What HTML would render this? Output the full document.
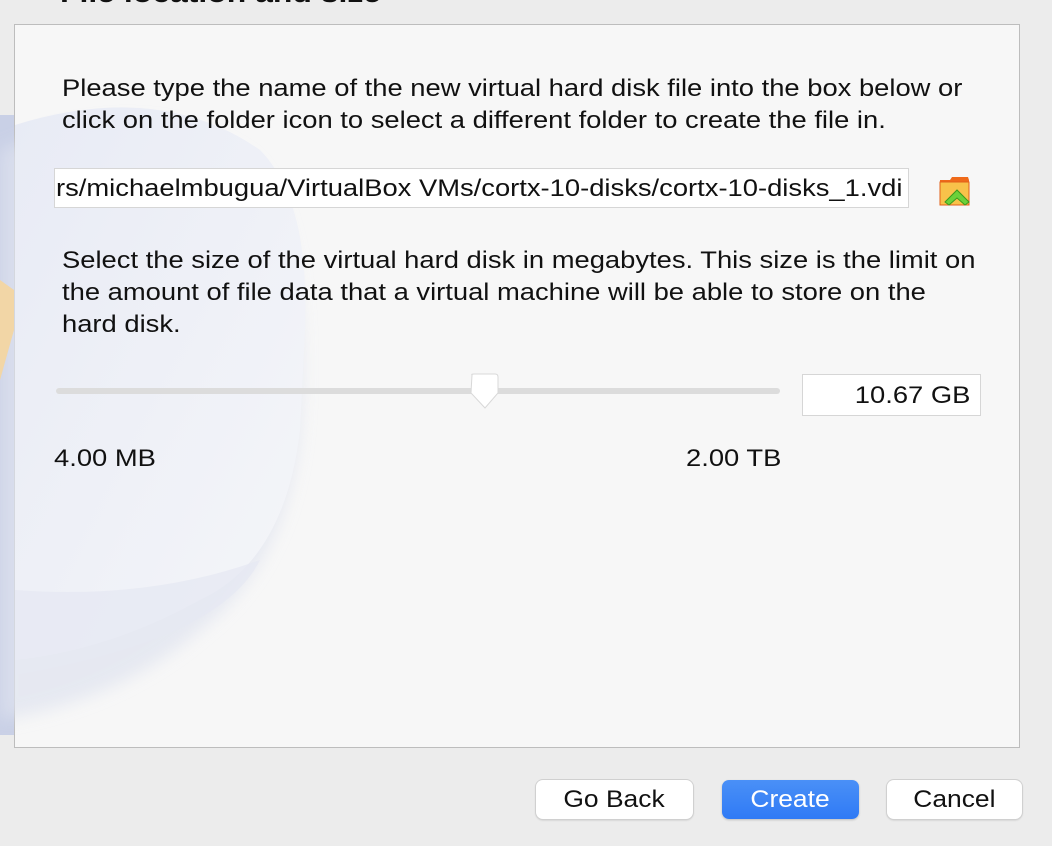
<!DOCTYPE html>
<html><head><style>
body{margin:0;width:1052px;height:846px;background:#ececec;font-family:"Liberation Sans",sans-serif;position:relative;overflow:hidden;color:#111}
.abs{position:absolute}
.s{display:inline-block;transform:scaleX(1.14);transform-origin:0 0}
.t{font-size:24px;line-height:32px;left:62px;white-space:nowrap}
.btn{position:absolute;top:780px;height:39px;border-radius:7px;background:#fff;box-shadow:0 0 0 1px #d0d0d0,0 1px 2px rgba(0,0,0,.2);font-size:24px;line-height:39px;text-align:center}
.btn span{display:inline-block;transform:scaleX(1.1)}
</style></head><body>
<svg class="abs" style="left:0;top:0" width="1052" height="846">
<defs>
<linearGradient id="g" x1="0" y1="0" x2="1" y2="1"><stop offset="0" stop-color="#e8ebf5"/><stop offset="1" stop-color="#f5f6f9"/></linearGradient>
<filter id="b"><feGaussianBlur stdDeviation="8"/></filter>
</defs>
<rect x="0" y="115" width="14" height="620" fill="#c9d0e6"/>
<rect x="14.5" y="24.5" width="1005" height="723" fill="#f7f7f7" stroke="#bdbdbd"/>
<path d="M0 150 Q150 90 250 160 Q310 220 300 420 Q290 560 200 630 Q120 700 0 720 Z" fill="#dfe3ef" filter="url(#b)" opacity=".7"/>
<path d="M15 125 Q160 80 260 150 Q310 200 305 330 L300 430 Q285 560 200 600 Q110 650 15 660 Z" fill="url(#g)"/>
<path d="M15 590 Q150 600 260 560 Q220 640 15 675 Z" fill="#e6e9f2" opacity=".8"/>
<path d="M0 280 L14 290 L14 330 L0 380Z" fill="#f2d6a6"/>
</svg>
<div class="abs" style="left:60px;top:-23px;font-size:28px;font-weight:bold;line-height:32px;"><span class="s">File location and size</span></div>
<div class="abs t" style="top:73px"><span class="s">Please type the name of the new virtual hard disk file into the box below or<br>click on the folder icon to select a different folder to create the file in.</span></div>
<div class="abs" style="left:55px;top:169px;width:852px;height:38px;background:#fff;box-shadow:0 0 0 1px #d6d6d6;overflow:hidden;font-size:24px;line-height:40px;white-space:nowrap;padding-left:1px"><span class="s">rs/michaelmbugua/VirtualBox VMs/cortx-10-disks/cortx-10-disks_1.vdi</span></div>
<svg class="abs" style="left:938px;top:174px" width="36" height="34" viewBox="0 0 36 34">
<path d="M2 6 L12 6 L14 3 L30 3 L31 6 L31 31 L2 31 Z" fill="#ef6a1a"/>
<rect x="2" y="8" width="29" height="23" fill="#f8c24a" stroke="#e2601a"/>
<path d="M7 28 L19 16 L31 28 L27 31 L19 24 L11 31 Z" fill="#6cd13a" stroke="#3a9a1c"/>
</svg>
<div class="abs t" style="top:245px"><span class="s">Select the size of the virtual hard disk in megabytes. This size is the limit on<br>the amount of file data that a virtual machine will be able to store on the<br>hard disk.</span></div>
<div class="abs" style="left:56px;top:388px;width:724px;height:6px;border-radius:3px;background:#dcdcdc"></div>
<svg class="abs" style="left:468px;top:372px" width="34" height="40"><path d="M4 3 Q3 2 6 2 L27 2 Q30 2 30 5 L30 21 L17 36 L3 21 Z" fill="#fff" stroke="#d8d8d8"/></svg>
<div class="abs" style="left:803px;top:375px;width:177px;height:40px;background:#fff;box-shadow:0 0 0 1px #d6d6d6;font-size:24px;line-height:42px;text-align:right;box-sizing:border-box;padding-right:10px"><span style="display:inline-block;transform:scaleX(1.14);transform-origin:100% 0">10.67 GB</span></div>
<div class="abs" style="left:54px;top:445px;font-size:24px"><span class="s">4.00 MB</span></div>
<div class="abs" style="left:686px;top:445px;font-size:24px"><span class="s">2.00 TB</span></div>
<div class="btn" style="left:536px;width:157px"><span>Go Back</span></div>
<div class="btn" style="left:722px;width:137px;background:linear-gradient(#4a90f7,#2f7af5);color:#fff;box-shadow:0 1px 2px rgba(0,0,0,.2)"><span>Create</span></div>
<div class="btn" style="left:887px;width:135px"><span>Cancel</span></div>
</body></html>
